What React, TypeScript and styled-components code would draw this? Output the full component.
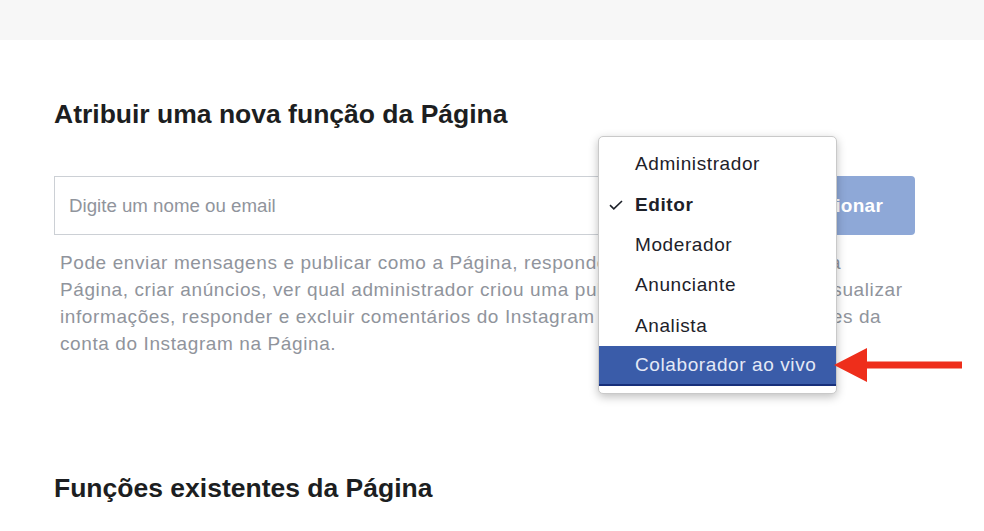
import styled, { createGlobalStyle } from 'styled-components';

const GlobalStyle = createGlobalStyle`
  html, body {
    margin: 0;
    padding: 0;
    background: #ffffff;
  }
  body {
    font-family: "Liberation Sans", Arial, sans-serif;
    -webkit-font-smoothing: antialiased;
  }
`;

const ROLES = ['Administrador', 'Editor', 'Moderador', 'Anunciante', 'Analista', 'Colaborador ao vivo'];

export default function App() {
  return (
    <>
      <GlobalStyle />
      <Page>
        <TopBar />
        <Content>
          <Title>Atribuir uma nova função da Página</Title>
          <FormArea>
            <FormRow>
              <NameInput placeholder="Digite um nome ou email" />
              <AddButton disabled>Adicionar</AddButton>
            </FormRow>
            <Description>
              Pode enviar mensagens e publicar como a Página, responder e excluir comentários na
              <br />
              Página, criar anúncios, ver qual administrador criou uma publicação ou comentário, visualizar
              <br />
              informações, responder e excluir comentários do Instagram pela Página, editar detalhes da
              <br />
              conta do Instagram na Página.
            </Description>
            <RoleMenu>
              {ROLES.map((role) => (
                <RoleItem key={role} $selected={role === 'Editor'} $active={role === 'Colaborador ao vivo'}>
                  {role === 'Editor' && (
                    <Check viewBox="0 0 14 10">
                      <path d="M1 5.2 L4.8 8.8 L13 1" fill="none" stroke="#1d2129" strokeWidth="1.6" />
                    </Check>
                  )}
                  {role}
                </RoleItem>
              ))}
            </RoleMenu>
            <Pointer viewBox="0 0 128 34">
              <polygon points="0,17 33,0 33,13.5 128,13.5 128,20.5 33,20.5 33,34" fill="#ee2e1b" />
            </Pointer>
          </FormArea>
          <SecondTitle>Funções existentes da Página</SecondTitle>
        </Content>
      </Page>
    </>
  );
}

const Page = styled.div`
  width: 984px;
  height: 531px;
  overflow: hidden;
  background: #ffffff;
`;

const TopBar = styled.div`
  height: 40px;
  background: #f7f7f7;
`;

const Content = styled.div`
  padding: 60px 69px 0 54px;
`;

const Title = styled.h2`
  margin: 0;
  color: #1c1e21;
  font-size: 26.5px;
  font-weight: 700;
  line-height: 28px;
`;

const FormArea = styled.div`
  position: relative;
  margin-top: 48px;
`;

const FormRow = styled.div`
  display: flex;
  gap: 10px;
  height: 59px;
`;

const NameInput = styled.input`
  flex: 1;
  box-sizing: border-box;
  height: 59px;
  border: 1px solid #ccd0d5;
  padding: 0 14px;
  font-family: inherit;
  font-size: 18.7px;
  color: #1c1e21;
  outline: none;
  &::placeholder {
    color: #90949c;
  }
`;

const AddButton = styled.button`
  width: 160px;
  height: 59px;
  padding: 0 0 0 6px;
  border: none;
  border-radius: 4px;
  background: #8ea8d7;
  color: #ffffff;
  font-family: inherit;
  font-size: 19px;
  font-weight: 700;
  letter-spacing: 0.3px;
`;

const Description = styled.p`
  margin: 14px 0 0 6px;
  color: #90949c;
  font-size: 19px;
  letter-spacing: 0.6px;
  line-height: 27px;
  white-space: nowrap;
`;

const RoleMenu = styled.ul`
  position: absolute;
  left: 544px;
  top: -40px;
  width: 239px;
  margin: 0;
  padding: 7px 0;
  list-style: none;
  background: #ffffff;
  border: 1px solid #c9c9c9;
  border-radius: 5px;
  box-shadow: 0 3px 10px rgba(0, 0, 0, 0.25);
  box-sizing: border-box;
`;

const RoleItem = styled.li<{ $selected?: boolean; $active?: boolean }>`
  position: relative;
  height: 40.4px;
  padding-left: 36px;
  display: flex;
  align-items: center;
  font-size: 19px;
  letter-spacing: 0.6px;
  font-weight: ${({ $selected }) => ($selected ? 700 : 400)};
  color: ${({ $active }) => ($active ? '#e4e9f6' : '#1d2129')};
  background: ${({ $active }) => ($active ? '#3a5ca9' : 'transparent')};
  border-bottom: ${({ $active }) => ($active ? '2px solid #172f7a' : 'none')};
  box-sizing: border-box;
`;

const Check = styled.svg`
  position: absolute;
  left: 10px;
  top: 16px;
  width: 14px;
  height: 10px;
`;

const Pointer = styled.svg`
  position: absolute;
  left: 780px;
  top: 172px;
  width: 128px;
  height: 34px;
`;

const SecondTitle = styled.h2`
  margin: 117px 0 0;
  color: #1c1e21;
  font-size: 26.5px;
  font-weight: 700;
  line-height: 28px;
`;
